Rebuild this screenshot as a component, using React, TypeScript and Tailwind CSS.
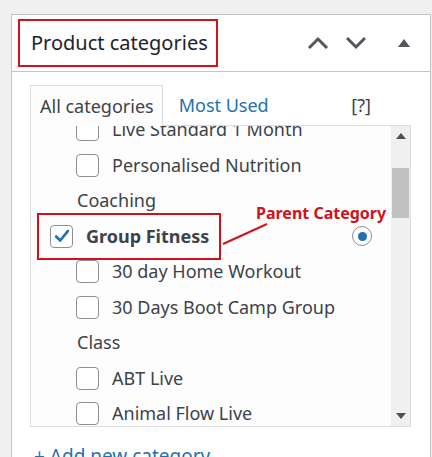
import React from "react";

const font = { fontFamily: '"Noto Sans", "Open Sans", sans-serif' };

function Box({ checked = false }: { checked?: boolean }) {
  return (
    <div className="w-[23px] h-[23px] shrink-0 rounded-[4px] border border-[#8c8f94] bg-white flex items-center justify-center">
      {checked && (
        <svg width="18" height="18" viewBox="0 0 20 20">
          <path d="M3.5 10.5 L8 15 L16.5 4.5" fill="none" stroke="#2271b1" strokeWidth="3" strokeLinecap="round" strokeLinejoin="round" />
        </svg>
      )}
    </div>
  );
}

function Item({ label }: { label: string }) {
  return (
    <div className="h-[35.5px] flex items-center gap-[13px] pl-[45px]">
      <Box />
      <span className="text-[18px] text-[#3c434a] whitespace-nowrap">{label}</span>
    </div>
  );
}

function Heading({ label }: { label: string }) {
  return (
    <div className="h-[35.5px] flex items-center pl-[46px]">
      <span className="text-[18px] text-[#3c434a] whitespace-nowrap">{label}</span>
    </div>
  );
}

export default function App() {
  return (
    <div className="w-[432px] h-[457px] bg-[#f0f0f1] overflow-hidden pt-[14px] pl-[11px] pr-[1px]" style={font}>
      <div className="h-[460px] bg-white border border-[#c3c4c7] flex flex-col">
        {/* header */}
        <div className="h-[57px] shrink-0 border-b border-[#c3c4c7] flex items-center pl-[6px] pr-[20px]">
          <div className="h-[48px] w-[200px] border-2 border-[#d0121b] flex items-center pl-[11px]">
            <span className="text-[20px] text-[#1d2327] whitespace-nowrap">Product categories</span>
          </div>
          <div className="ml-auto flex items-center">
            <svg width="24" height="14" viewBox="0 0 24 14" className="mr-[14px]">
              <polyline points="3,12 12,3 21,12" fill="none" stroke="#50575e" strokeWidth="3" />
            </svg>
            <svg width="24" height="14" viewBox="0 0 24 14" className="mr-[30px]">
              <polyline points="3,2 12,11 21,2" fill="none" stroke="#50575e" strokeWidth="3" />
            </svg>
            <svg width="12" height="10" viewBox="0 0 12 10">
              <polygon points="0,9 6,1 12,9" fill="#50575e" />
            </svg>
          </div>
        </div>
        {/* body */}
        <div className="pl-[18px] pr-[19px] pt-[13px]">
          {/* tabs */}
          <div className="flex items-end h-[40px]">
            <div className="h-[41px] -mb-px relative z-10 border border-b-0 border-[#dcdcde] bg-[#fdfdfd] pl-[9px] pr-[8px] flex items-center">
              <span className="text-[18px] text-[#3c434a] whitespace-nowrap">All categories</span>
            </div>
            <div className="h-[40px] flex items-center ml-[16px]">
              <span className="text-[18px] text-[#2271b1] whitespace-nowrap">Most Used</span>
            </div>
            <div className="h-[40px] flex items-center ml-auto mr-[40px]">
              <span className="text-[18px] text-[#3c434a]">[?]</span>
            </div>
          </div>
          {/* list */}
          <div className="relative h-[302px] border border-[#dcdcde] bg-[#fdfdfd] flex">
            <div className="flex-1 overflow-hidden relative">
              <div className="-mt-[14px]">
                <Item label="Live Standard 1 Month" />
                <Item label="Personalised Nutrition" />
                <Heading label="Coaching" />
                <div className="h-[35.5px] flex items-center gap-[13px] pl-[19px]">
                  <Box checked />
                  <span className="text-[18px] font-bold text-[#3c434a] whitespace-nowrap">Group Fitness</span>
                  <div className="ml-auto mr-[19px] w-[20px] h-[20px] rounded-full border border-[#8c8f94] bg-white flex items-center justify-center">
                    <div className="w-[9px] h-[9px] rounded-full bg-[#2271b1]" />
                  </div>
                </div>
                <Item label="30 day Home Workout" />
                <Item label="30 Days Boot Camp Group" />
                <Heading label="Class" />
                <Item label="ABT Live" />
                <Item label="Animal Flow Live" />
              </div>
              {/* annotation */}
              <div className="absolute left-[6px] top-[87px] w-[184px] h-[47px] border-2 border-[#d0121b]" />
              <div className="absolute left-[225px] top-[79px] text-[16px] font-bold text-[#d0121b] whitespace-nowrap leading-none">
                Parent Category
              </div>
              <svg className="absolute left-[190px] top-[96px]" width="50" height="24" viewBox="0 0 50 24">
                <line x1="2" y1="22" x2="46" y2="2" stroke="#d0121b" strokeWidth="2" />
              </svg>
            </div>
            {/* scrollbar */}
            <div className="w-[19px] bg-[#f0f0f0] flex flex-col items-center">
              <div className="h-[20px] flex items-center justify-center">
                <svg width="10" height="6" viewBox="0 0 10 6"><polygon points="0,6 5,0 10,6" fill="#505050" /></svg>
              </div>
              <div className="mt-[22px] w-[17px] h-[50px] bg-[#c1c1c1]" />
              <div className="mt-auto h-[20px] flex items-center justify-center">
                <svg width="10" height="6" viewBox="0 0 10 6"><polygon points="0,0 5,6 10,0" fill="#505050" /></svg>
              </div>
            </div>
          </div>
          <div className="mt-[20px] pl-[4px] text-[19px] text-[#2271b1] whitespace-nowrap leading-none">
            + Add new category
          </div>
        </div>
      </div>
    </div>
  );
}
